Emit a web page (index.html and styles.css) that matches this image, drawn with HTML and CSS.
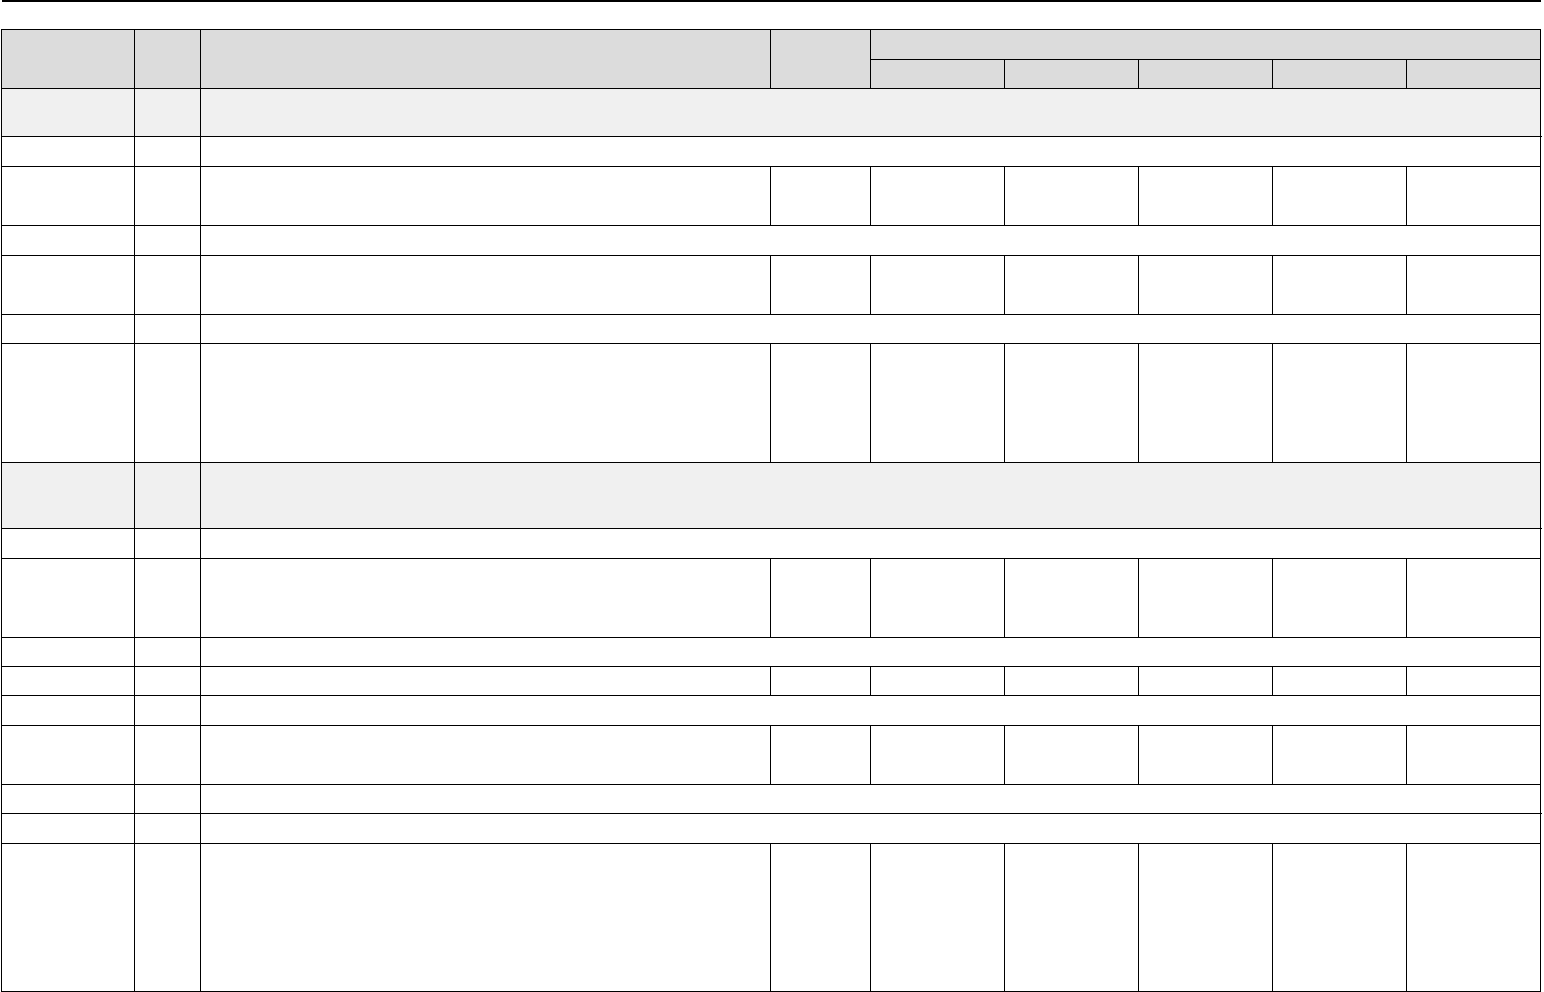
FILE: index.html
```html
<!DOCTYPE html>
<html lang="en">
<head>
<meta charset="utf-8">
<title>Table</title>
<link rel="stylesheet" href="styles.css">
</head>
<body>
<div class="rule"></div>
<table class="grid">
  <colgroup>
    <col class="c1"><col class="c2"><col class="c3"><col class="c4">
    <col class="c5"><col class="c5"><col class="c5"><col class="c5"><col class="c5">
  </colgroup>
  <thead>
    <tr class="h30">
      <th rowspan="2"></th><th rowspan="2"></th><th rowspan="2"></th><th rowspan="2"></th>
      <th colspan="5"></th>
    </tr>
    <tr class="h29">
      <th></th><th></th><th></th><th></th><th></th>
    </tr>
  </thead>
  <tbody>
    <tr class="section h48"><td></td><td></td><td colspan="8"></td></tr>
    <tr class="h30"><td></td><td></td><td colspan="8"></td></tr>
    <tr class="h59"><td></td><td></td><td></td><td></td><td></td><td></td><td></td><td></td><td></td></tr>
    <tr class="h30"><td></td><td></td><td colspan="8"></td></tr>
    <tr class="h59"><td></td><td></td><td></td><td></td><td></td><td></td><td></td><td></td><td></td></tr>
    <tr class="h29"><td></td><td></td><td colspan="8"></td></tr>
    <tr class="h119"><td></td><td></td><td></td><td></td><td></td><td></td><td></td><td></td><td></td></tr>
    <tr class="section h66"><td></td><td></td><td colspan="8"></td></tr>
    <tr class="h30"><td></td><td></td><td colspan="8"></td></tr>
    <tr class="h79"><td></td><td></td><td></td><td></td><td></td><td></td><td></td><td></td><td></td></tr>
    <tr class="h29"><td></td><td></td><td colspan="8"></td></tr>
    <tr class="h29"><td></td><td></td><td></td><td></td><td></td><td></td><td></td><td></td><td></td></tr>
    <tr class="h30"><td></td><td></td><td colspan="8"></td></tr>
    <tr class="h59"><td></td><td></td><td></td><td></td><td></td><td></td><td></td><td></td><td></td></tr>
    <tr class="h29"><td></td><td></td><td colspan="8"></td></tr>
    <tr class="h30"><td></td><td></td><td colspan="8"></td></tr>
    <tr class="h148"><td></td><td></td><td></td><td></td><td></td><td></td><td></td><td></td><td></td></tr>
  </tbody>
</table>
</body>
</html>
```
FILE: styles.css
```css
html, body {
  margin: 0;
  padding: 0;
  background: #ffffff;
  font-family: "Liberation Sans", Arial, sans-serif;
  font-size: 13px;
}
.rule {
  width: 1539px;
  height: 2px;
  margin-left: 2px;
  background: #000000;
}
.grid {
  margin-top: 27px;
  margin-left: 1px;
  width: 1540px;
  table-layout: fixed;
  border-collapse: collapse;
}
.grid th,
.grid td {
  border: 1px solid #000000;
  padding: 0;
}
.grid th {
  background: #dcdcdc;
}
.grid .section td {
  background: #f0f0f0;
}
.c1 { width: 133px; }
.c2 { width: 66px; }
.c3 { width: 570px; }
.c4 { width: 100px; }
.c5 { width: 134px; }
.h29 { height: 29px; }
.h30 { height: 30px; }
.h48 { height: 48px; }
.h59 { height: 59px; }
.h66 { height: 66px; }
.h79 { height: 79px; }
.h119 { height: 119px; }
.h148 { height: 148px; }
```
